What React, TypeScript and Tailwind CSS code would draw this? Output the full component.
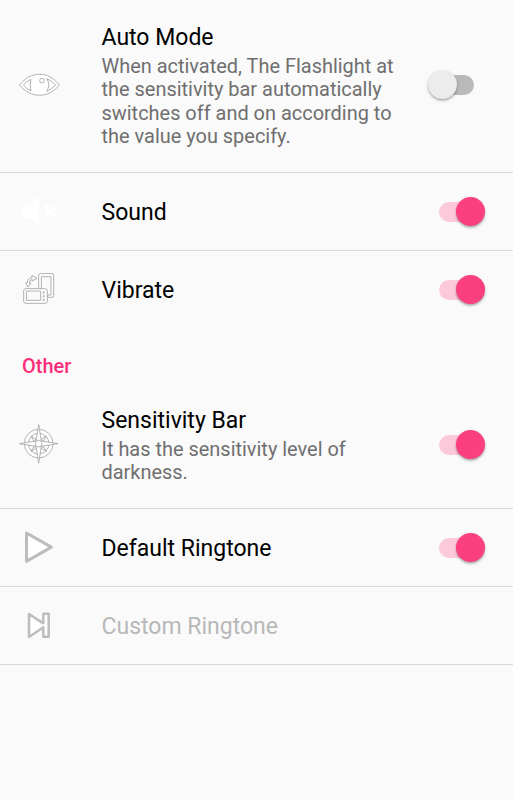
import type { ReactNode } from 'react';
import clsx from 'clsx';

function Icon({ children, className }: { children: ReactNode; className?: string }) {
  return (
    <svg
      viewBox="0 0 120 120"
      fill="none"
      strokeWidth="2.6"
      strokeLinejoin="round"
      className={clsx('h-10 w-10 shrink-0 overflow-visible', className ?? 'stroke-[#a6a6a6]')}
    >
      {children}
    </svg>
  );
}

const EyeIcon = () => (
  <Icon>
    <path fill="#fff" d="M2 60 C35 17 88 17 121 60 C88 101 35 101 2 60Z" />
    <path d="M36 43 Q22 49 13 60 Q22 71 36 78 Q31 60 36 43Z" />
    <path d="M83 41 Q99 48 110 60 Q99 72 83 79 Q96 60 83 41Z" />
    <circle cx="69" cy="47" r="7" />
  </Icon>
);

const MutedIcon = () => (
  <Icon className="stroke-white">
    <path fill="#fff" d="M9 43H28L59 15V101L28 75H9Z" />
    <path strokeWidth="12" d="M79 42L111 75M111 42L79 75" />
  </Icon>
);

const RotateIcon = () => (
  <Icon>
    <path fill="#fff" d="M59 56V16Q59 11 64 11H99Q104 11 104 16V77Q104 82 99 82H86V61Q86 56 80 56Z" />
    <path fill="#fafafa" d="M67 56V20H96V75H86" />
    <rect x="14" y="56" width="71" height="44" rx="7" fill="#fff" />
    <rect x="22" y="63" width="43" height="28" fill="#fafafa" />
    <path strokeWidth="2" d="M72 65h4v5h-4zM72 76h4v5h-4zM72 87h4v5h-4z" />
    <path d="M27 51L20 38L25 39Q25 24 39 22V16L54 25L39 33V28Q32 29 31 39L36 39Z" />
  </Icon>
);

const CompassIcon = () => (
  <Icon>
    <circle cx="59" cy="56" r="43" fill="#fff" />
    <circle cx="59" cy="56" r="31" />
    <path d="M36 33L51 42L45 48ZM82 33L73 48L67 42ZM36 79L45 64L51 70ZM82 79L67 70L73 64Z" />
    <path fill="#fff" d="M59 -1L67 48L117 56L67 64L59 114L51 64L1 56L51 48Z" />
    <circle cx="59" cy="56" r="10" fill="#fff" />
  </Icon>
);

const PlayIcon = () => (
  <Icon className="stroke-[#bdbdbd]">
    <path strokeWidth="9" fill="#fff" d="M22.5 15V100L97 57.5Z" />
  </Icon>
);

const SkipIcon = () => (
  <Icon className="stroke-[#bdbdbd]">
    <path strokeWidth="7.5" fill="#fff" d="M30 24V93L73 64V92H89V23H73V52Z" />
  </Icon>
);

function Switch({ on }: { on: boolean }) {
  return (
    <div
      role="switch"
      aria-checked={on}
      className={clsx('relative h-5 w-[35px] shrink-0 rounded-full', on ? 'bg-[#fcc9db]' : 'bg-[#b9b9b9]')}
    >
      <span
        className={clsx(
          'absolute -top-[5px] size-[29px] rounded-full shadow-[0_1.5px_2.5px_rgba(0,0,0,0.35)]',
          on ? 'left-[17px] bg-[#fc407f]' : '-left-[11px] bg-[#ececec]',
        )}
      />
    </div>
  );
}

interface PreferenceProps {
  icon: ReactNode;
  title: string;
  summary?: string;
  on?: boolean;
  disabled?: boolean;
  className: string;
}

function Preference({ icon, title, summary, on, disabled, className }: PreferenceProps) {
  return (
    <div className={clsx('flex items-center border-b pr-[39px] pl-[19px]', className)}>
      {icon}
      <div className="ml-[42.5px] w-[300px] pt-0.5">
        <h3 className={clsx('text-[23px] leading-[27px]', disabled ? 'text-[#b8b8b8]' : 'text-black')}>{title}</h3>
        {summary && <p className="mt-1 text-[19.95px] leading-[23.4px] text-[#6f6f6f]">{summary}</p>}
      </div>
      {on !== undefined && (
        <div className="ml-auto">
          <Switch on={on} />
        </div>
      )}
    </div>
  );
}

export default function App() {
  return (
    <div className="h-[800px] w-[514px] overflow-hidden bg-white font-['Roboto',sans-serif]">
      <div className="h-full w-[513px] bg-[#fafafa]">
        <Preference
          icon={<EyeIcon />}
          title="Auto Mode"
          summary="When activated, The Flashlight at the sensitivity bar automatically switches off and on according to the value you specify."
          on={false}
          className="h-[173px] border-[#d9d9d9] pb-0.5"
        />
        <Preference icon={<MutedIcon />} title="Sound" on className="h-[78px] border-[#d9d9d9]" />
        <Preference icon={<RotateIcon />} title="Vibrate" on className="h-[78px] border-transparent" />

        <h2 className="h-[51px] pt-[25px] pl-[22px] text-[19.95px] leading-[24px] font-medium text-[#fc2d78]">Other</h2>
        <Preference
          icon={<CompassIcon />}
          title="Sensitivity Bar"
          summary="It has the sensitivity level of darkness."
          on
          className="h-[129px] border-[#d9d9d9] pt-px"
        />
        <Preference icon={<PlayIcon />} title="Default Ringtone" on className="h-[78px] border-[#d9d9d9]" />
        <Preference icon={<SkipIcon />} title="Custom Ringtone" disabled className="h-[78px] border-[#d9d9d9]" />
      </div>
    </div>
  );
}
